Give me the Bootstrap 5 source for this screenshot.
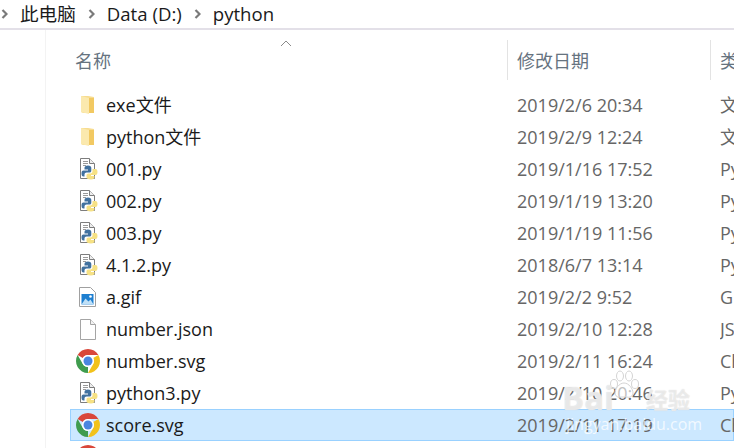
<!DOCTYPE html>
<html lang="zh-CN">
  <head>
    <meta charset="utf-8" />
    <meta name="viewport" content="width=device-width, initial-scale=1" />
    <title>python</title>
    <link href="https://cdn.jsdelivr.net/npm/bootstrap@5.3.3/dist/css/bootstrap.min.css" rel="stylesheet" />
    <style>
      html, body {
        height: 448px;
        overflow: hidden;
      }
      body {
        font-family: "Open Sans", "Noto Sans CJK SC", sans-serif;
        font-size: 18px;
        background: #fff;
        color: #1a1a1a;
      }
      .crumbs {
        height: 30px;
        border-bottom: 2px solid #e3e0e8;
        padding-left: 1px;
        font-size: 18.6px;
        line-height: 26px;
      }
      .crumb-arrow {
        width: 7px;
        height: 10px;
        flex: none;
      }
      .crumb-item {
        margin-left: 12px;
        margin-right: 12px;
      }
      .pane {
        margin-left: 45px;
        padding-top: 10px;
        position: relative;
        height: 418px;
        overflow: hidden;
        box-shadow: inset 1px 0 0 #f3f3f3;
      }
      .head-row {
        height: 40px;
        margin-bottom: 9px;
        color: #66737f;
        line-height: 42px;
        position: relative;
      }
      .head-name {
        width: 462px;
        padding-left: 30px;
      }
      .head-date {
        width: 203px;
        padding-left: 9px;
        border-left: 1px solid #e3e3e3;
      }
      .head-type {
        flex: 1;
        padding-left: 9px;
        border-left: 1px solid #e3e3e3;
        overflow: hidden;
        white-space: nowrap;
      }
      .sort-caret {
        position: absolute;
        left: 235px;
        top: 0;
        width: 12px;
        height: 7px;
      }
      .file-row {
        height: 32px;
        line-height: 31px;
        margin-left: 25px;
        white-space: nowrap;
      }
      .file-row.picked {
        background: #cce8ff;
        box-shadow: inset 0 0 0 1px #99d1ff;
      }
      .file-icon {
        width: 36px;
        flex: none;
      }
      .file-icon svg {
        display: block;
      }
      .file-name {
        width: 411px;
        flex: none;
      }
      .file-date {
        width: 203px;
        flex: none;
        color: #666;
      }
      .file-type {
        flex: 1;
        overflow: hidden;
        color: #666;
      }
      .watermark {
        position: absolute;
        left: 562px;
        top: 368px;
        width: 134px;
        height: 64px;
        pointer-events: none;
      }
      .wm-logo {
        position: absolute;
        left: 0;
        top: 12px;
        font-size: 33px;
        font-weight: 700;
        line-height: 36px;
        color: rgba(255, 255, 255, 0.55);
        text-shadow: 0 0 1px #d0d0d0;
      }
      .wm-cn {
        position: absolute;
        left: 84px;
        top: 18px;
        font-size: 22px;
        font-weight: 700;
        line-height: 26px;
        color: rgba(255, 255, 255, 0.55);
        text-shadow: 0 0 1px #d0d0d0;
      }
      .wm-paw {
        position: absolute;
        left: 45px;
        top: 2px;
        width: 34px;
        height: 30px;
      }
      .wm-url {
        position: absolute;
        left: 4px;
        top: 46px;
        font-size: 16px;
        line-height: 20px;
        color: rgba(255, 255, 255, 0.75);
      }
    </style>
  </head>
  <body>
    <!-- icon set -->
    <svg width="0" height="0" class="position-absolute">
      <symbol id="ico-folder" viewBox="0 0 20 22">
        <path d="M3 2h7l6 1v16H5l-2-1z" fill="#f7dc8f" />
        <path d="M3 2l8 2v16l-8-2z" fill="#fbe9ae" />
        <path d="M11 4h5v15h-5z" fill="#f2c962" />
      </symbol>
      <symbol id="ico-py" viewBox="0 0 20 22">
        <path d="M2.500 .5h9l5 5v15h-14z" fill="#fff" stroke="#7d7d7d" />
        <path d="M11.500 .5v5h5" fill="#eee" stroke="#7d7d7d" />
        <path d="M5 3.500h5M5 5.500h5M5 7.500h3" stroke="#9a9a9a" />
        <path d="M10 7.500c-2.500 0-3.500 1-3.500 2.500v1.500H10v1H5.500c-1.500 0-2 1.200-2 3s.6 3 2 3h1v-2c0-1.300.9-2 2.200-2h2.800c1 0 1.800-.8 1.800-1.800V10c0-1.500-1-2.500-3.300-2.500z" fill="#41719f" />
        <path d="M13 21.500c2.500 0 3.500-1 3.500-2.500v-1h-3.500v-1h4.500c1.300 0 2-1.200 2-3s-.7-3-2-3h-3v2.300c0 1.300-1 2.200-2.200 2.200h-2c-1 0-1.800.8-1.800 1.800v1.700c0 1.500 1.200 2.500 4.500 2.500z" fill="#f6e184" />
      </symbol>
      <symbol id="ico-gif" viewBox="0 0 20 22">
        <path d="M1.500 1.500h11l5 5v14h-16z" fill="#fff" stroke="#a0a0a0" />
        <path d="M3.500 8h12v10.500h-12z" fill="#1e7fd0" />
        <path d="M3.500 18.500l4-6 3 3 2-2 3 5z" fill="#bfe0f7" />
        <circle cx="12.500" cy="10.500" r="1.300" fill="#fff" />
      </symbol>
      <symbol id="ico-blank" viewBox="0 0 20 22">
        <path d="M2.500 1.500h10l5 5v15h-15z" fill="#fff" stroke="#a5a5a5" />
        <path d="M12.500 1.500v5h5" fill="#f2f2f2" stroke="#a5a5a5" />
      </symbol>
      <symbol id="ico-chrome" viewBox="0 0 24 24">
        <path d="M1.610 6A12 12 0 0 1 22.390 6H12A6 6 0 0 0 6.800 9z" fill="#d9473a" />
        <path d="M1.610 6A12 12 0 0 1 22.390 6H12A6 6 0 0 0 6.800 9z" fill="#f2c21b" transform="rotate(120 12 12)" />
        <path d="M1.610 6A12 12 0 0 1 22.390 6H12A6 6 0 0 0 6.800 9z" fill="#3f9c4e" transform="rotate(240 12 12)" />
        <circle cx="12" cy="12" r="6" fill="#fff" />
        <circle cx="12" cy="12" r="4.500" fill="#4a86e0" />
      </symbol>
    </svg>

    <div class="crumbs d-flex align-items-center">
      <svg class="crumb-arrow" viewBox="0 0 7 10"><path d="M1.500 1l4 4-4 4" fill="none" stroke="#7a7a7a" stroke-width="2.200" /></svg>
      <span class="crumb-item">此电脑</span>
      <svg class="crumb-arrow" viewBox="0 0 7 10"><path d="M1.500 1l4 4-4 4" fill="none" stroke="#7a7a7a" stroke-width="2.200" /></svg>
      <span class="crumb-item">Data (D:)</span>
      <svg class="crumb-arrow" viewBox="0 0 7 10"><path d="M1.500 1l4 4-4 4" fill="none" stroke="#7a7a7a" stroke-width="2.200" /></svg>
      <span class="crumb-item">python</span>
    </div>

    <div class="pane">
      <div class="head-row d-flex">
        <svg class="sort-caret" viewBox="0 0 12 7"><path d="M1 6l5-5 5 5" fill="none" stroke="#8a8a8a" /></svg>
        <div class="head-name">名称</div>
        <div class="head-date">修改日期</div>
        <div class="head-type">类型</div>
      </div>

      <div class="file-row d-flex align-items-center">
        <div class="file-icon d-flex justify-content-center"><svg width="20" height="22"><use href="#ico-folder" /></svg></div>
        <div class="file-name">exe文件</div>
        <div class="file-date">2019/2/6 20:34</div>
        <div class="file-type">文件夹</div>
      </div>
      <div class="file-row d-flex align-items-center">
        <div class="file-icon d-flex justify-content-center"><svg width="20" height="22"><use href="#ico-folder" /></svg></div>
        <div class="file-name">python文件</div>
        <div class="file-date">2019/2/9 12:24</div>
        <div class="file-type">文件夹</div>
      </div>
      <div class="file-row d-flex align-items-center">
        <div class="file-icon d-flex justify-content-center"><svg width="20" height="22"><use href="#ico-py" /></svg></div>
        <div class="file-name">001.py</div>
        <div class="file-date">2019/1/16 17:52</div>
        <div class="file-type">Python File</div>
      </div>
      <div class="file-row d-flex align-items-center">
        <div class="file-icon d-flex justify-content-center"><svg width="20" height="22"><use href="#ico-py" /></svg></div>
        <div class="file-name">002.py</div>
        <div class="file-date">2019/1/19 13:20</div>
        <div class="file-type">Python File</div>
      </div>
      <div class="file-row d-flex align-items-center">
        <div class="file-icon d-flex justify-content-center"><svg width="20" height="22"><use href="#ico-py" /></svg></div>
        <div class="file-name">003.py</div>
        <div class="file-date">2019/1/19 11:56</div>
        <div class="file-type">Python File</div>
      </div>
      <div class="file-row d-flex align-items-center">
        <div class="file-icon d-flex justify-content-center"><svg width="20" height="22"><use href="#ico-py" /></svg></div>
        <div class="file-name">4.1.2.py</div>
        <div class="file-date">2018/6/7 13:14</div>
        <div class="file-type">Python File</div>
      </div>
      <div class="file-row d-flex align-items-center">
        <div class="file-icon d-flex justify-content-center"><svg width="20" height="22"><use href="#ico-gif" /></svg></div>
        <div class="file-name">a.gif</div>
        <div class="file-date">2019/2/2 9:52</div>
        <div class="file-type">GIF 文件</div>
      </div>
      <div class="file-row d-flex align-items-center">
        <div class="file-icon d-flex justify-content-center"><svg width="20" height="22"><use href="#ico-blank" /></svg></div>
        <div class="file-name">number.json</div>
        <div class="file-date">2019/2/10 12:28</div>
        <div class="file-type">JSON 文件</div>
      </div>
      <div class="file-row d-flex align-items-center">
        <div class="file-icon d-flex justify-content-center"><svg width="24" height="24"><use href="#ico-chrome" /></svg></div>
        <div class="file-name">number.svg</div>
        <div class="file-date">2019/2/11 16:24</div>
        <div class="file-type">Chrome HTML</div>
      </div>
      <div class="file-row d-flex align-items-center">
        <div class="file-icon d-flex justify-content-center"><svg width="20" height="22"><use href="#ico-py" /></svg></div>
        <div class="file-name">python3.py</div>
        <div class="file-date">2019/2/10 20:46</div>
        <div class="file-type">Python File</div>
      </div>
      <div class="file-row picked d-flex align-items-center">
        <div class="file-icon d-flex justify-content-center"><svg width="24" height="24"><use href="#ico-chrome" /></svg></div>
        <div class="file-name">score.svg</div>
        <div class="file-date">2019/2/11 17:19</div>
        <div class="file-type">Chrome HTML</div>
      </div>
      <div class="file-row d-flex align-items-center">
        <div class="file-icon d-flex justify-content-center"><svg width="24" height="24"><use href="#ico-chrome" /></svg></div>
      </div>
    </div>

    <!-- baidu watermark over the rows -->
    <div class="watermark">
      <svg class="wm-paw" viewBox="0 0 34 30">
        <g fill="rgba(255,255,255,.6)" stroke="#d4d4d4">
          <ellipse cx="7" cy="14" rx="3.500" ry="4.500" />
          <ellipse cx="13" cy="6" rx="3.500" ry="5" />
          <ellipse cx="22" cy="6" rx="3.500" ry="5" />
          <ellipse cx="28" cy="14" rx="3.500" ry="4.500" />
          <path d="M17 13c-5 0-9 6-9 10 0 3 3 5 6 4h6c3 1 6-1 6-4 0-4-4-10-9-10z" />
        </g>
      </svg>
      <div class="wm-logo">Bai</div>
      <div class="wm-cn">经验</div>
      <div class="wm-url">jingyan.baidu.com</div>
    </div>

    <script src="https://cdn.jsdelivr.net/npm/bootstrap@5.3.3/dist/js/bootstrap.bundle.min.js"></script>
  </body>
</html>
